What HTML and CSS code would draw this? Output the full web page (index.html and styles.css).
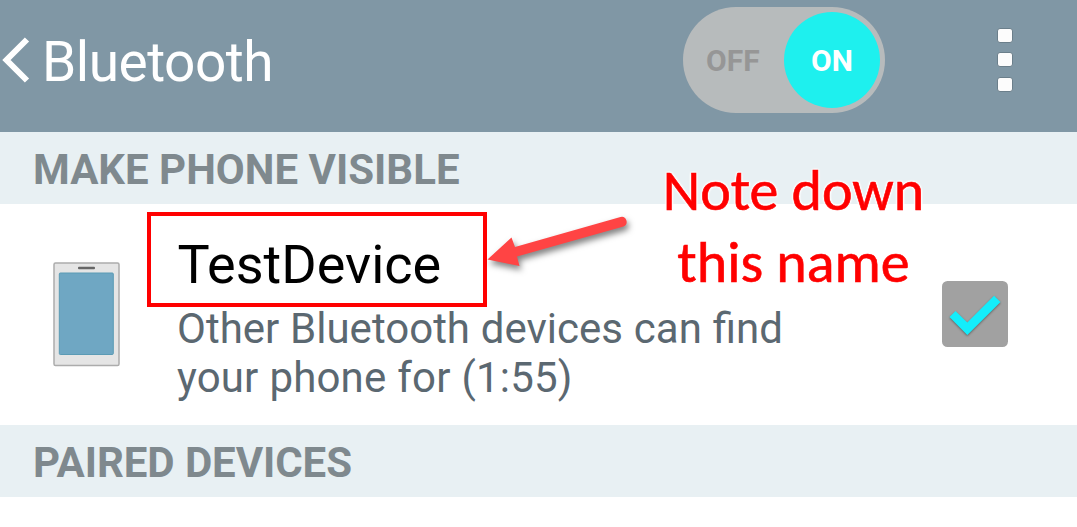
FILE: index.html
```html
<!DOCTYPE html>
<html lang="en">
<head>
<meta charset="utf-8">
<title>Bluetooth</title>
<link rel="stylesheet" href="styles.css">
</head>
<body>
<main class="screen">
  <header class="app-bar">
    <svg class="back" viewBox="0 0 30 50" width="30" height="50" aria-label="Back"><path d="M27 4.500L6.500 25L27 45.500" fill="none" stroke="#fff" stroke-width="6"/></svg>
    <h1 class="title">Bluetooth</h1>
    <div class="toggle">
      <span class="toggle-off">OFF</span>
      <span class="toggle-on">ON</span>
    </div>
    <div class="menu"><i class="dot"></i><i class="dot"></i><i class="dot"></i></div>
  </header>
  <h2 class="section">MAKE PHONE VISIBLE</h2>
  <section class="device">
    <svg class="phone" viewBox="0 0 68 105" width="68" height="105">
      <rect x="1" y="1" width="65" height="102.500" rx="1.500" fill="#e5e5e5" stroke="#acacac" stroke-width="1.500"/>
      <rect x="25" y="4.700" width="17" height="2.600" rx="1" fill="#666"/>
      <rect x="6.300" y="11" width="54" height="81.500" rx="1" fill="#6fa7c3" stroke="#5b9bb5"/>
    </svg>
    <div class="details">
      <div class="highlight">TestDevice</div>
      <p class="description"><span class="line">Other Bluetooth devices can find</span><span class="line line-two">your phone for (1:55)</span></p>
    </div>
    <svg class="check" viewBox="0 0 66 66" width="66" height="66">
      <rect width="66" height="66" rx="5.500" fill="#a1a1a1"/>
      <path class="tick" d="M7.500 36L13.500 30L25.300 41.500L52 14.800L58.500 21L25.300 54Z" fill="#14edfb"/>
    </svg>
  </section>
  <h2 class="section paired">PAIRED DEVICES</h2>

  <svg class="arrow" viewBox="0 0 160 70" width="160" height="70">
    <path d="M7.500 49.500L31.500 27.500L35 37L140.500 7A5 5 0 0 1 143.500 16.500L37 46.500L39.500 56Z" fill="#ff4444"/>
  </svg>
  <div class="note"><span class="note-line">Note down</span><span class="note-line">this name</span></div>
</main>
</body>
</html>
```
FILE: styles.css
```css
* { box-sizing: border-box; }
body { margin: 0; background: #fff; font-family: Roboto, sans-serif; }
.screen { position: relative; width: 1077px; height: 527px; overflow: hidden; background: #fff; }
.app-bar { display: flex; align-items: flex-start; height: 132px; background: #8097a5; }
.back { margin-top: 35px; flex: none; }
.title { width: 653px; margin: 28px 0 0; padding-left: 12px; font-size: 55px; line-height: 68px; font-weight: 400; letter-spacing: -.5px; color: #fff; }
.toggle { display: flex; align-items: center; justify-content: space-between; flex: none; width: 202px; height: 106px; margin-top: 7px; padding: 0 5px 0 23px; border-radius: 53px; background: #b7bbbc; font-size: 30px; font-weight: 700; line-height: 98px; }
.toggle-off { padding-top: 2px; color: #969696; }
.toggle-on { width: 96px; height: 96px; border-radius: 50%; background: #1ef0ee; color: #fff; text-align: center; }
.menu { display: grid; gap: 9.4px; margin: 28px 0 0 112px; }
.dot { width: 16px; height: 15px; border: 1px solid #6b7f8b; border-radius: 3px; background: #fcfcfc; }
.section { height: 72px; margin: 0; padding: 2px 0 0 33px; background: #e8f0f3; color: #7f898e; font-size: 42px; font-weight: 700; line-height: 72px; }
.paired { letter-spacing: -.08px; }
.device { display: flex; align-items: flex-start; height: 221px; }
.phone { flex: none; margin: 57.5px 0 0 53px; }
.details { width: 821px; padding: 8px 0 0 26px; }
.highlight { width: 340px; height: 95px; padding: 10px 0 0 26.5px; border: 4px solid #f00; font-size: 54px; line-height: 78px; color: #000; }
.description { margin: -3px 0 0 30px; font-size: 42px; line-height: 49px; color: #5b6871; }
.line { display: block; white-space: nowrap; word-spacing: .4px; }
.line-two { letter-spacing: .15px; }
.check { flex: none; margin-top: 77px; }
.tick { filter: drop-shadow(0 1px 1px rgba(0, 0, 0, .4)); }
.arrow { position: absolute; left: 480px; top: 210px; filter: drop-shadow(2px 4px 3px rgba(0, 0, 0, .5)); }
.note { position: absolute; left: 633px; top: 154.5px; width: 321px; font-family: Carlito, Lato, sans-serif; font-size: 58px; line-height: 72px; color: #f00; -webkit-text-stroke: .6px #f00; text-align: center; text-shadow: 0 0 3px #fff, 1px 1px 2px #fff, -1px -1px 2px #fff, 1px -1px 2px #fff, -1px 1px 2px #fff; }
.note-line { display: block; }
```
